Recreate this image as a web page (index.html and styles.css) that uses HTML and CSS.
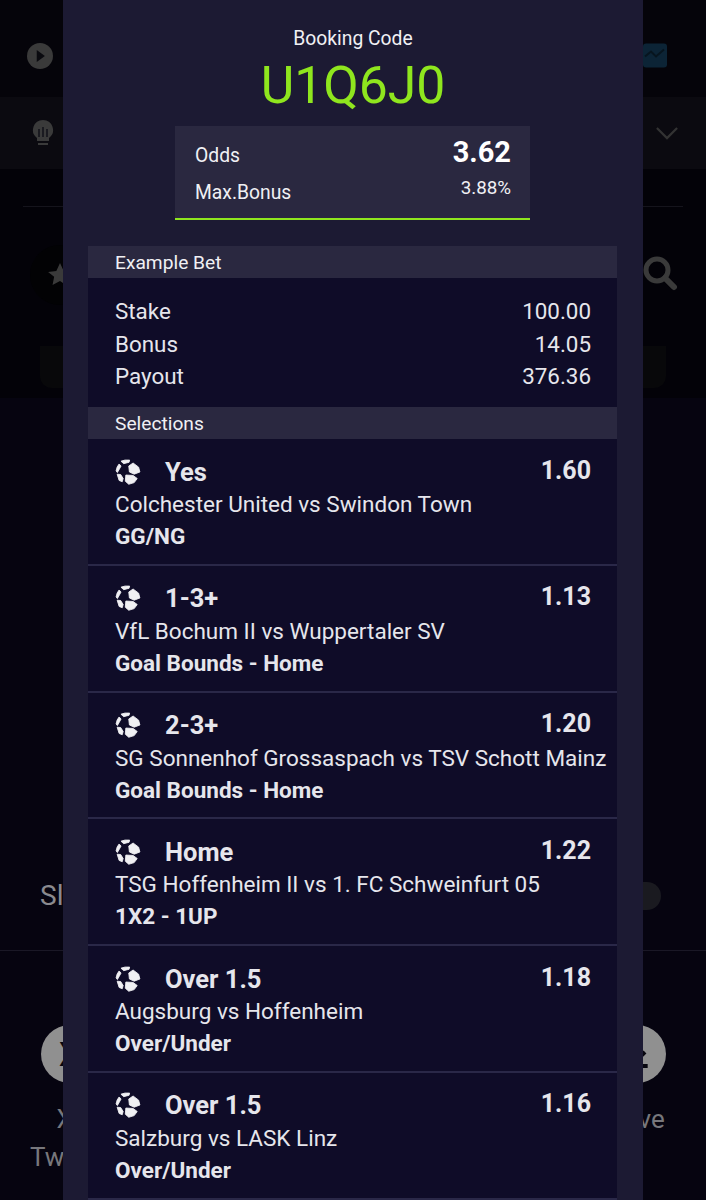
FILE: index.html

```html
<!DOCTYPE html>
<html lang="en">
<head>
  <meta charset="UTF-8" />
  <meta name="viewport" content="width=device-width, initial-scale=1.0"/>
  <title>Booking Code</title>
  <link rel="stylesheet" href="styles.css">
</head>
<body>

<!-- Dimmed page behind the popup -->
<div class="page">
  <div class="top-row">
    <svg class="play" viewBox="0 0 24 24" width="26" height="26"><circle cx="12" cy="12" r="12" fill="#3a3a3a"/><path d="M9 6.500l7.500 5.500L9 17.500z" fill="#0a0a0f"/></svg>
    <svg class="chart" viewBox="0 0 24 24" width="24" height="25"><rect width="24" height="24" rx="3" fill="#0c2436"/><path d="M2 13l6-5 5 5 8-7" fill="none" stroke="#07151f" stroke-width="2"/></svg>
  </div>
  <div class="tip-row">
    <svg class="bulb" viewBox="0 0 22 28" width="22" height="28"><path d="M11 1a10 10 0 0 0-6 18v3h12v-3a10 10 0 0 0-6-18z" fill="#3a3a3a"/><path d="M7 10v8M11 8v10M15 10v8" stroke="#101018" stroke-width="1.500"/><rect x="6" y="24" width="10" height="2" fill="#3a3a3a"/></svg>
    <svg class="chevron" viewBox="0 0 24 14" width="22" height="13"><path d="M1 1l11 11L23 1" fill="none" stroke="#333" stroke-width="2.400"/></svg>
  </div>
  <div class="divider"></div>
  <div class="search-row">
    <div class="star-btn">
      <svg viewBox="0 0 24 24" width="26" height="26"><path d="M12 1l3.400 7.200 7.600 1-5.600 5.300 1.500 7.700L12 17.500 5.100 21.200l1.500-7.700L1 9.200l7.600-1z" fill="#3a3a3a"/></svg>
    </div>
    <svg class="search" viewBox="0 0 36 36" width="36" height="36"><circle cx="15" cy="15" r="11" fill="none" stroke="#3a3a3a" stroke-width="5"/><path d="M23 23l9 9" stroke="#3a3a3a" stroke-width="6" stroke-linecap="round"/></svg>
  </div>
  <div class="tabs-row"><div class="tabs-pill"></div></div>
  <div class="content">
    <div class="share-row">
      <span class="share-label">Slip</span>
      <span class="toggle"></span>
    </div>
    <div class="social-row">
      <div class="social">
        <span class="round">X</span>
        <span class="social-name">X/<br>Twitter</span>
      </div>
      <div class="social">
        <span class="round">
          <svg viewBox="0 0 24 24" width="32" height="32"><path d="M12 3v13M6 10.500l6 6 6-6M4 21h16" fill="none" stroke="#07060f" stroke-width="3"/></svg>
        </span>
        <span class="social-name">Save</span>
      </div>
    </div>
  </div>
</div>

<!-- Popup -->
<div class="popup">
  <div class="booking-label">Booking Code</div>
  <div class="booking-code">U1Q6J0</div>

  <div class="summary">
    <div class="summary-line">
      <span class="summary-name">Odds</span>
      <span class="summary-odds">3.62</span>
    </div>
    <div class="summary-line">
      <span class="summary-name">Max.Bonus</span>
      <span class="summary-bonus">3.88%</span>
    </div>
  </div>

  <div class="section-title">Example Bet</div>
  <div class="example">
    <div class="example-line"><span>Stake</span><span>100.00</span></div>
    <div class="example-line"><span>Bonus</span><span>14.05</span></div>
    <div class="example-line"><span>Payout</span><span>376.36</span></div>
  </div>

  <div class="section-title">Selections</div>
  <div class="selections">

    <div class="sel">
      <div class="sel-head">
        <svg class="ball" viewBox="0 0 24 24" width="26" height="26"><use href="#ball"/></svg>
        <span class="sel-pick">Yes</span>
        <span class="sel-odds">1.60</span>
      </div>
      <div class="sel-match">Colchester United vs Swindon Town</div>
      <div class="sel-market">GG/NG</div>
    </div>

    <div class="sel">
      <div class="sel-head">
        <svg class="ball" viewBox="0 0 24 24" width="26" height="26"><use href="#ball"/></svg>
        <span class="sel-pick">1-3+</span>
        <span class="sel-odds">1.13</span>
      </div>
      <div class="sel-match">VfL Bochum II vs Wuppertaler SV</div>
      <div class="sel-market">Goal Bounds - Home</div>
    </div>

    <div class="sel">
      <div class="sel-head">
        <svg class="ball" viewBox="0 0 24 24" width="26" height="26"><use href="#ball"/></svg>
        <span class="sel-pick">2-3+</span>
        <span class="sel-odds">1.20</span>
      </div>
      <div class="sel-match">SG Sonnenhof Grossaspach vs TSV Schott Mainz</div>
      <div class="sel-market">Goal Bounds - Home</div>
    </div>

    <div class="sel">
      <div class="sel-head">
        <svg class="ball" viewBox="0 0 24 24" width="26" height="26"><use href="#ball"/></svg>
        <span class="sel-pick">Home</span>
        <span class="sel-odds">1.22</span>
      </div>
      <div class="sel-match">TSG Hoffenheim II vs 1. FC Schweinfurt 05</div>
      <div class="sel-market">1X2 - 1UP</div>
    </div>

    <div class="sel">
      <div class="sel-head">
        <svg class="ball" viewBox="0 0 24 24" width="26" height="26"><use href="#ball"/></svg>
        <span class="sel-pick">Over 1.5</span>
        <span class="sel-odds">1.18</span>
      </div>
      <div class="sel-match">Augsburg vs Hoffenheim</div>
      <div class="sel-market">Over/Under</div>
    </div>

    <div class="sel">
      <div class="sel-head">
        <svg class="ball" viewBox="0 0 24 24" width="26" height="26"><use href="#ball"/></svg>
        <span class="sel-pick">Over 1.5</span>
        <span class="sel-odds">1.16</span>
      </div>
      <div class="sel-match">Salzburg vs LASK Linz</div>
      <div class="sel-market">Over/Under</div>
    </div>

  </div>
</div>

<!-- Ball icon shared by the selections -->
<svg class="defs" width="0" height="0">
  <defs>
    <g id="ball" fill="#f0f0f3" stroke="#f0f0f3" stroke-width="0.800" stroke-linejoin="round">
      <path d="M5.500 2Q9 0.500 13.500 1L13 3 8 4.300z"/>
      <path d="M12.700 6.500L16.700 3.700 21.800 7.500 23 12 17.700 14 13.300 12z"/>
      <path d="M3.800 4.600L5.600 6.500 2.200 12.500 1 11Q1.500 7 3.800 4.600z"/>
      <path d="M2 14L5.300 14.400 7.500 18 6.700 21 3.800 19.800z"/>
      <path d="M10 14.800L16.700 15.200 20.500 18 17.700 21.800 12.700 23.300 9.500 20.500z"/>
    </g>
  </defs>
</svg>

</body>
</html>
```

FILE: styles.css

```css
body {
  margin: 0;
  padding: 0;
  background-color: #030208;
  font-family: Roboto, "Liberation Sans", sans-serif;
  overflow: hidden;
  height: 1200px;
}

/* page behind the popup */
.page {
  height: 1200px;
  display: flex;
  flex-direction: column;
  color: #8e8e8e;
}
.top-row {
  height: 97px;
  flex: none;
  display: flex;
  align-items: center;
  justify-content: space-between;
  padding: 14px 39px 0 27px;
  box-sizing: border-box;
  background-color: #05040a;
}
.tip-row {
  height: 72px;
  flex: none;
  display: flex;
  align-items: center;
  justify-content: space-between;
  padding: 0 28px 0 32px;
  box-sizing: border-box;
  background-color: #0b0a10;
}
.divider {
  height: 1px;
  margin: 37px 23px 0;
  background-color: #15141c;
  flex: none;
}
.search-row {
  height: 139px;
  flex: none;
  display: flex;
  align-items: flex-start;
  justify-content: space-between;
  padding: 38px 28px 0 30px;
  box-sizing: border-box;
}
.star-btn {
  width: 60px;
  height: 60px;
  border-radius: 30px;
  background-color: #020204;
  display: flex;
  align-items: center;
  justify-content: center;
}
.search {
  margin-top: 10px;
}
.tabs-row {
  height: 52px;
  flex: none;
  padding: 0 40px;
  box-sizing: border-box;
}
.tabs-pill {
  height: 42px;
  border-radius: 0 0 12px 12px;
  background-color: #08080a;
}
.content {
  flex: 1;
  display: flex;
  flex-direction: column;
  background-color: #060410;
}
.share-row {
  margin-top: 443px;
  height: 110px;
  flex: none;
  box-sizing: border-box;
  display: flex;
  align-items: center;
  justify-content: space-between;
  padding: 0 45px 0 40px;
  border-bottom: 1px solid #1a1826;
}
.share-label {
  font-size: 28px;
  color: #8a8a8f;
}
.toggle {
  width: 60px;
  height: 28px;
  border-radius: 14px;
  background-color: #1a1a20;
}
.social-row {
  display: flex;
  justify-content: space-between;
  padding: 74px 40px 0 41px;
}
.social {
  width: 58px;
  display: flex;
  flex-direction: column;
  align-items: center;
}
.round {
  width: 58px;
  height: 58px;
  flex: none;
  border-radius: 50%;
  background-color: #909090;
  color: #07060f;
  font-size: 34px;
  font-weight: 700;
  display: flex;
  align-items: center;
  justify-content: center;
}
.social-name {
  margin-top: 17px;
  font-size: 26px;
  line-height: 38px;
  color: #77777c;
  text-align: center;
}

/* popup */
.popup {
  position: absolute;
  top: 0;
  left: 63px;
  width: 580px;
  height: 1200px;
  overflow: hidden;
  background-color: #1c1a33;
  color: #f0f0f4;
}
.booking-label {
  margin-top: 28px;
  font-size: 19.300px;
  line-height: 22px;
  text-align: center;
}
.booking-code {
  margin-top: 6px;
  font-size: 51.700px;
  line-height: 60px;
  color: #8fe61e;
  text-align: center;
}
.summary {
  margin: 10px 0 0 112px;
  width: 355px;
  height: 94px;
  padding: 11px 19px 0 20px;
  box-sizing: border-box;
  background-color: #2a2840;
  border-bottom: 2px solid #8fe61e;
}
.summary-line {
  display: flex;
  justify-content: space-between;
  align-items: center;
  height: 37px;
}
.summary-name {
  font-size: 19.300px;
}
.summary-odds {
  margin-bottom: 8px;
  font-size: 29px;
  font-weight: 700;
  color: #fff;
}
.summary-bonus {
  margin-bottom: 10px;
  font-size: 18.800px;
}
.section-title {
  margin: 0 26px 0 25px;
  height: 32px;
  line-height: 34px;
  padding-left: 27px;
  font-size: 19.200px;
  background-color: #2a2840;
}
.summary + .section-title {
  margin-top: 26px;
}
.example {
  margin: 0 26px 0 25px;
  height: 129px;
  padding-top: 17px;
  box-sizing: border-box;
  background-color: #0f0c28;
}
.example-line {
  display: flex;
  justify-content: space-between;
  padding: 0 26px 0 27px;
  font-size: 22.400px;
  line-height: 32.500px;
  color: #e6e6ec;
}
.selections {
  margin: 0 26px 0 25px;
  background-color: #0f0c28;
}
.sel {
  height: 126.800px;
  padding: 16px 10px 0 27px;
  box-sizing: border-box;
  border-bottom: 2px solid #2a2848;
  color: #e6e6ec;
}
.sel-head {
  display: flex;
  align-items: center;
  height: 33px;
}
.ball {
  flex: none;
  margin-right: 24px;
}
.sel-pick {
  font-size: 25.500px;
  font-weight: 700;
}
.sel-odds {
  margin-left: auto;
  margin-right: 16px;
  margin-bottom: 3px;
  font-size: 25px;
  font-weight: 700;
}
.sel-match {
  font-size: 22.500px;
  line-height: 32px;
  white-space: nowrap;
}
.sel-market {
  font-size: 22.500px;
  font-weight: 700;
  line-height: 32px;
}
.defs {
  position: absolute;
}
```
